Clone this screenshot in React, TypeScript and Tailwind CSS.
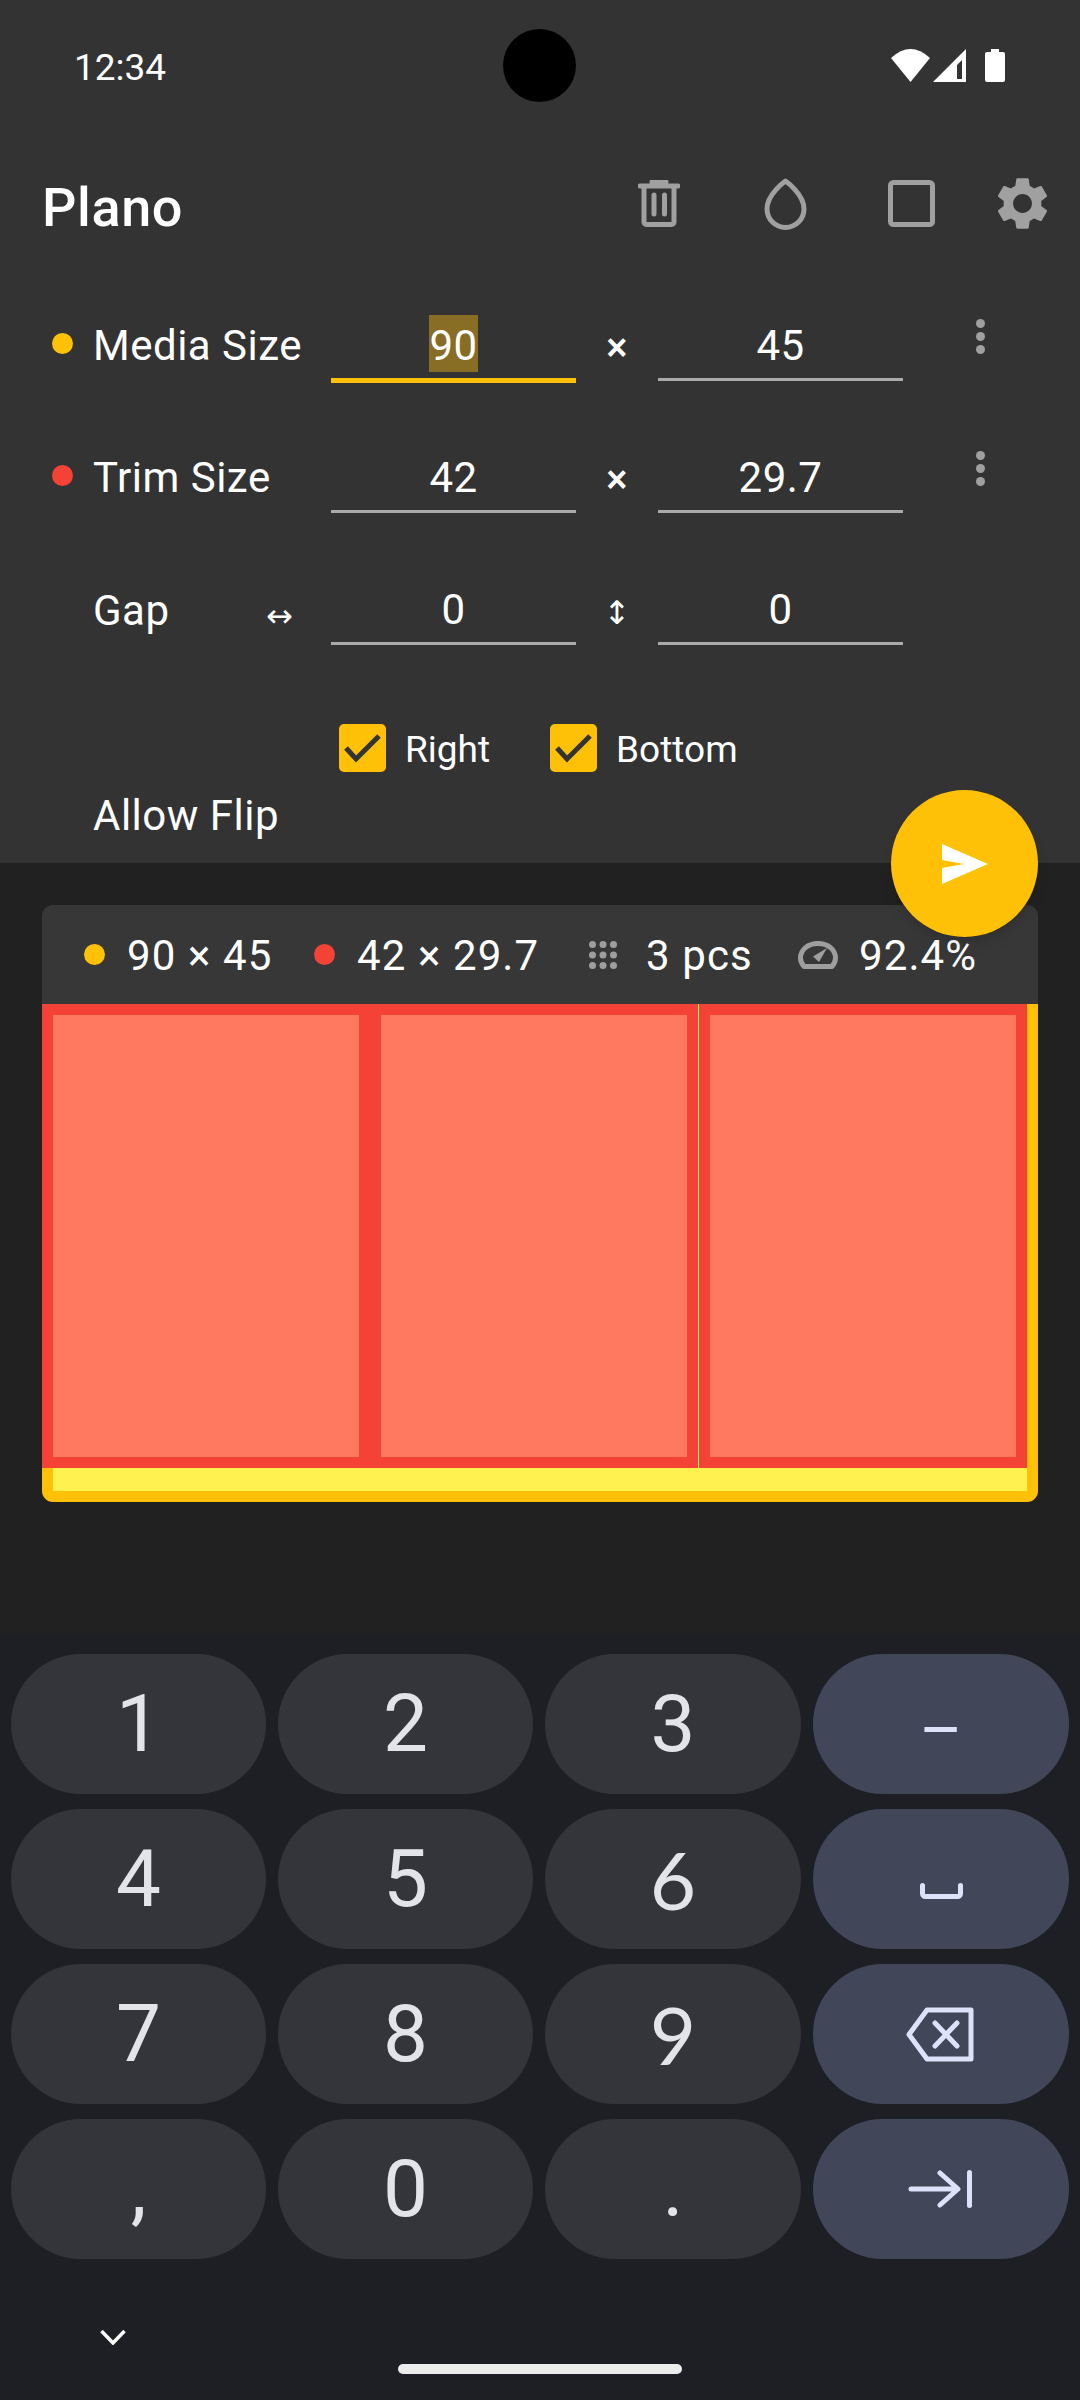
import React from "react";

const FONT = "font-['Roboto',sans-serif]";

function StatusBar() {
    return (
        <div className="relative flex h-[130px] items-start pt-[44px] pl-[74px] pr-[75px] justify-between">
            <span className="text-[37px] leading-[48px] text-white">12:34</span>
            <div className="absolute left-[503px] top-[29px] h-[73px] w-[73px] rounded-full bg-black" />
            <div className="flex items-start pt-[5px]">
                <svg width="39" height="33" viewBox="0 0 39 33" fill="white">
                    <path d="M19.5 33 L0 9 Q19.5 -9 39 9 Z" />
                </svg>
                <svg className="ml-[3px]" width="33" height="33" viewBox="0 0 33 33" fill="white">
                    <path fillRule="evenodd" d="M0 33 L33 0 V33 Z M24 30 H29 V11 L24 16 Z" />
                </svg>
                <svg className="ml-[19px]" width="20" height="33" viewBox="0 0 20 33" fill="white">
                    <path d="M6 0 H14 V3 H18 a2 2 0 0 1 2 2 V31 a2 2 0 0 1 -2 2 H2 a2 2 0 0 1 -2 -2 V5 a2 2 0 0 1 2 -2 H6 Z" />
                </svg>
            </div>
        </div>
    );
}

function Toolbar() {
    return (
        <div className="flex h-[147px] items-center pl-[42px]">
            <span className="pt-[8px] text-[54px] font-medium leading-[60px] tracking-[0.6px] text-white">Plano</span>
            <div className="ml-auto flex items-center pr-[32px]">
                <svg width="42" height="47" viewBox="0 0 42 47" fill="none" stroke="#a0a0a0">
                    <path d="M14 2 H28 M2 6 H40" strokeWidth="5" strokeLinecap="round" />
                    <path d="M6 8 V42 a2.5 2.5 0 0 0 2.5 2.5 H33.5 a2.5 2.5 0 0 0 2.5 -2.5 V8" strokeWidth="5" />
                    <path d="M16 15 V34 M26.5 15 V34" strokeWidth="5" strokeLinecap="round" />
                </svg>
                <svg className="ml-[84px]" width="43" height="52" viewBox="0 0 43 52" fill="none" stroke="#a0a0a0" strokeWidth="5" strokeLinejoin="round">
                    <path d="M21.5 3 C21.5 3 3 16 3 31 A18.5 18.5 0 0 0 40 31 C40 16 21.5 3 21.5 3 Z" />
                </svg>
                <svg className="ml-[81px]" width="47" height="47" viewBox="0 0 47 47" fill="none" stroke="#a0a0a0" strokeWidth="5">
                    <rect x="2.5" y="2.5" width="42" height="42" rx="3" />
                </svg>
                <svg className="ml-[56px] -mr-[6px]" width="63" height="63" viewBox="0 0 24 24" fill="#a0a0a0">
                    <path d="M19.14 12.94c.04-.3.06-.61.06-.94 0-.32-.02-.64-.07-.94l2.03-1.58c.18-.14.23-.41.12-.61l-1.92-3.32c-.12-.22-.37-.29-.59-.22l-2.39.96c-.5-.38-1.03-.7-1.62-.94l-.36-2.54c-.04-.24-.24-.41-.48-.41h-3.84c-.24 0-.43.17-.47.41l-.36 2.54c-.59.24-1.13.57-1.62.94l-2.39-.96c-.22-.08-.47 0-.59.22L2.74 8.87c-.12.21-.08.47.12.61l2.03 1.58c-.05.3-.09.63-.09.94s.02.64.07.94l-2.03 1.58c-.18.14-.23.41-.12.61l1.92 3.32c.12.22.37.29.59.22l2.39-.96c.5.38 1.03.7 1.62.94l.36 2.54c.05.24.24.41.48.41h3.84c.24 0 .44-.17.47-.41l.36-2.54c.59-.24 1.13-.56 1.62-.94l2.39.96c.22.08.47 0 .59-.22l1.92-3.32c.12-.22.07-.47-.12-.61l-2.01-1.58zM12 15.6c-1.98 0-3.6-1.62-3.6-3.6s1.62-3.6 3.6-3.6 3.6 1.62 3.6 3.6-1.62 3.6-3.6 3.6z" />
                </svg>
            </div>
        </div>
    );
}

function Field({ value, focused }: { value: string; focused?: boolean }) {
    return (
        <div className={focused ? "h-[68px] w-[245px] border-b-[5px] border-[#ffc107] text-center" : "h-[66px] w-[245px] border-b-[3px] border-[#aaaaaa] text-center"}>
            <span className={focused ? "inline-block h-[57px] bg-[#886d25] text-[42px] leading-[61px] tracking-[0.5px] text-white" : "inline-block h-[57px] text-[42px] leading-[61px] tracking-[0.5px] text-white"}>
                {value}
            </span>
        </div>
    );
}

function Kebab() {
    return (
        <div className="ml-[73px] flex w-[9px] flex-col gap-[4px] pt-[4px]">
            <div className="h-[9px] w-[9px] rounded-full bg-[#a0a0a0]" />
            <div className="h-[9px] w-[9px] rounded-full bg-[#a0a0a0]" />
            <div className="h-[9px] w-[9px] rounded-full bg-[#a0a0a0]" />
        </div>
    );
}

function SizeRow({ label, dot, a, b, focused }: { label: string; dot: string; a: string; b: string; focused?: boolean }) {
    return (
        <div className="flex h-[132px] pt-[38px]">
            <div className="flex h-[57px] w-[331px] items-center pl-[52px]">
                <div className={`h-[21px] w-[21px] rounded-full ${dot}`} />
                <span className="ml-[20px] pt-[4px] text-[42px] tracking-[0.5px] text-white">{label}</span>
            </div>
            <Field value={a} focused={focused} />
            <div className="flex h-[57px] w-[82px] items-center justify-center pt-[8px] text-[40px] font-medium text-white">×</div>
            <Field value={b} />
            <Kebab />
        </div>
    );
}

function GapRow() {
    return (
        <div className="flex h-[132px] pt-[38px]">
            <div className="flex h-[57px] w-[331px] items-center pl-[93px]">
                <span className="pt-[6px] text-[42px] tracking-[0.5px] text-white">Gap</span>
                <span className="ml-auto mr-[38px] pt-[16px] font-['DejaVu_Sans',sans-serif] text-[32px] text-white">↔</span>
            </div>
            <Field value="0" />
            <div className="flex h-[57px] w-[82px] items-center justify-center pt-[10px] font-['DejaVu_Sans',sans-serif] text-[32px] text-white">↕</div>
            <Field value="0" />
        </div>
    );
}

function Check({ label }: { label: string }) {
    return (
        <div className="flex h-[48px] items-center">
            <div className="h-[48px] w-[47px] rounded-[5px] bg-[#ffc107]">
                <svg width="47" height="48" viewBox="0 0 47 48" fill="none" stroke="#333333" strokeWidth="5">
                    <path d="M7 24 L17 35 L40 12" />
                </svg>
            </div>
            <span className="ml-[19px] pt-[3px] text-[37px] leading-[48px] text-white">{label}</span>
        </div>
    );
}

function Piece() {
    return (
        <div className="h-full w-[328px] bg-[#f44336] p-[11px]">
            <div className="h-full w-full bg-[#ff7961]" />
        </div>
    );
}

function Dot({ color }: { color: string }) {
    return <div className={`h-[21px] w-[21px] rounded-full ${color}`} />;
}

function ResultCard() {
    return (
        <div className="mx-[42px] mt-[42px] overflow-hidden rounded-[11px]">
            <div className="flex h-[99px] items-center bg-[#373737] pl-[42px] text-[42px] tracking-[1.1px] text-white">
                <div className="flex w-[230px] items-center">
                    <Dot color="bg-[#ffc107]" />
                    <span className="ml-[22px] pt-[2px]">90 × 45</span>
                </div>
                <div className="flex w-[275px] items-center">
                    <Dot color="bg-[#f44336]" />
                    <span className="ml-[22px] pt-[2px]">42 × 29.7</span>
                </div>
                <div className="flex w-[209px] items-center">
                    <svg width="28" height="28" viewBox="0 0 28 28" fill="#9e9e9e">
                        <circle cx="3.5" cy="3.5" r="3.5" /><circle cx="14" cy="3.5" r="3.5" /><circle cx="24.5" cy="3.5" r="3.5" />
                        <circle cx="3.5" cy="14" r="3.5" /><circle cx="14" cy="14" r="3.5" /><circle cx="24.5" cy="14" r="3.5" />
                        <circle cx="3.5" cy="24.5" r="3.5" /><circle cx="14" cy="24.5" r="3.5" /><circle cx="24.5" cy="24.5" r="3.5" />
                    </svg>
                    <span className="ml-[29px] pt-[2px]">3 pcs</span>
                </div>
                <div className="flex items-center">
                    <svg width="40" height="28" viewBox="0 0 40 28" fill="none" stroke="#9e9e9e" strokeWidth="5">
                        <path d="M6 25.5 H34 C36.5 22.5 37.5 20 37.5 17 C37.5 8.5 30 2.5 20 2.5 C10 2.5 2.5 8.5 2.5 17 C2.5 20 3.5 22.5 6 25.5 Z" strokeLinejoin="round" />
                        <path d="M15 15.5 L29 7 L21 21 Z" fill="#9e9e9e" stroke="none" />
                    </svg>
                    <span className="ml-[21px] pt-[2px]">92.4%</span>
                </div>
            </div>
            <div className="bg-[#ffc107]">
                <div className="flex h-[464px] pr-[11px]">
                    <Piece />
                    <Piece />
                    <div className="h-full w-[1px] bg-[#fff250]" />
                    <Piece />
                </div>
                <div className="mx-[11px] h-[23px] bg-[#fff250]" />
                <div className="h-[11px]" />
            </div>
        </div>
    );
}

function Key({ label, font }: { label: string; font?: string }) {
    return (
        <div className={`flex h-[140px] items-center justify-center rounded-full bg-[#33353a] text-[80px] font-normal text-[#e3e4e9] ${font ?? ""}`}>
            {label}
        </div>
    );
}

function FnKey({ children }: { children: React.ReactNode }) {
    return <div className="flex h-[140px] items-center justify-center rounded-full bg-[#414659] text-[#dde1f9]">{children}</div>;
}

function Keyboard() {
    return (
        <div className="flex-1 bg-[#1e1f24]">
            <div className="grid grid-cols-[255px_255px_256px_256px] gap-x-[12px] gap-y-[15px] px-[11px] pt-[21px]">
                <Key label="1" />
                <Key label="2" />
                <Key label="3" />
                <FnKey>
                    <span className="pt-[14px] text-[66px] leading-none">–</span>
                </FnKey>
                <Key label="4" />
                <Key label="5" />
                <Key label="6" font="font-['Lato',sans-serif]" />
                <FnKey>
                    <svg className="mt-[24px]" width="43" height="16" viewBox="0 0 43 16" fill="none" stroke="#dde1f9" strokeWidth="5" strokeLinecap="round">
                        <path d="M2.5 2.5 V10.5 a3 3 0 0 0 3 3 H37.5 a3 3 0 0 0 3 -3 V2.5" />
                    </svg>
                </FnKey>
                <Key label="7" />
                <Key label="8" />
                <Key label="9" font="font-['Lato',sans-serif]" />
                <FnKey>
                    <svg className="mr-[2px]" width="68" height="55" viewBox="0 0 68 55" fill="none" stroke="#dde1f9" strokeWidth="5" strokeLinejoin="round" strokeLinecap="round">
                        <path d="M65 3 H21 L3 27.5 L21 52 H65 Z" />
                        <path d="M29 16 L51 39 M51 16 L29 39" />
                    </svg>
                </FnKey>
                <Key label="," />
                <Key label="0" />
                <Key label="." />
                <FnKey>
                    <svg className="mr-[1px]" width="65" height="38" viewBox="0 0 65 38" fill="none" stroke="#dde1f9" strokeWidth="5" strokeLinecap="round" strokeLinejoin="round">
                        <path d="M3 19 H49 M32 3 L50 19 L32 35" />
                        <path d="M61.5 2.5 V35.5" />
                    </svg>
                </FnKey>
            </div>
            <div className="flex items-start">
                <svg className="ml-[100px] mt-[71px]" width="26" height="15" viewBox="0 0 26 15" fill="none" stroke="white" strokeWidth="3.5">
                    <path d="M1.5 1 L13 13 L24.5 1" />
                </svg>
                <div className="ml-[272px] mt-[105px] h-[10px] w-[284px] rounded-full bg-[#ececec]" />
            </div>
        </div>
    );
}

export default function App() {
    return (
        <div className={`relative flex h-[2400px] w-[1080px] flex-col overflow-hidden bg-[#212121] ${FONT}`}>
            <div className="h-[863px] bg-[#333333]">
                <StatusBar />
                <Toolbar />
                <SizeRow label="Media Size" dot="bg-[#ffc107]" a="90" b="45" focused />
                <SizeRow label="Trim Size" dot="bg-[#f44336]" a="42" b="29.7" />
                <GapRow />
                <div className="mt-[51px] flex gap-[60px] pl-[339px]">
                    <Check label="Right" />
                    <Check label="Bottom" />
                </div>
                <div className="mt-[19px] pl-[93px] text-[42px] leading-[49px] tracking-[0.5px] text-white">Allow Flip</div>
            </div>
            <div className="h-[770px]">
                <ResultCard />
            </div>
            <Keyboard />
            <div className="absolute left-[891px] top-[790px] flex h-[147px] w-[147px] items-center justify-center rounded-full bg-[#ffc107] shadow-lg">
                <svg width="46" height="40" viewBox="0 0 46 40" fill="white">
                    <path d="M0 0 L46 20 L0 40 V24 L22 20 L0 16 Z" />
                </svg>
            </div>
        </div>
    );
}
